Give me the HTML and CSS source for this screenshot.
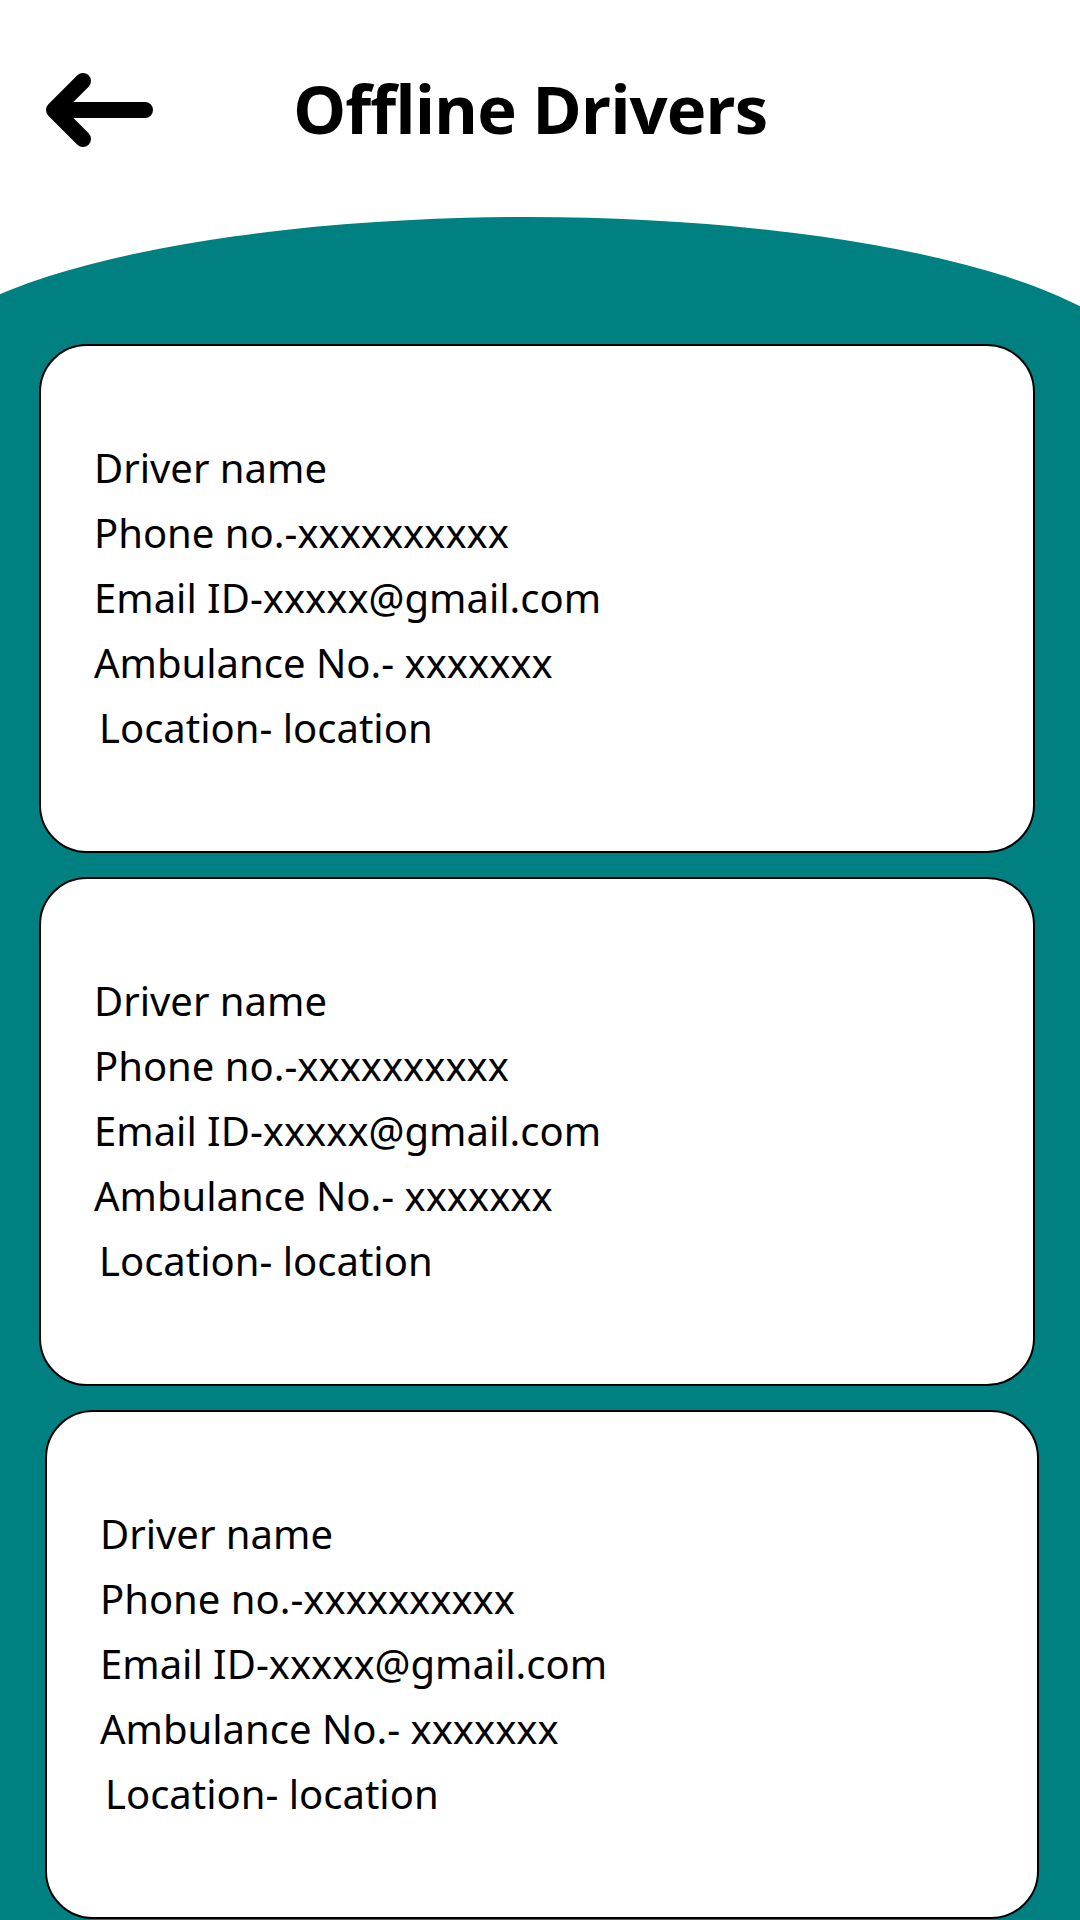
FILE: index.html
```html
<!DOCTYPE html>
<html lang="en">
<head>
<meta charset="utf-8">
<title>Offline Drivers</title>
<link rel="stylesheet" href="styles.css">
</head>
<body>
<div class="screen">
  <header class="header">
    <svg class="back" viewBox="0 0 125 85" width="125" height="85" aria-label="Back">
      <path d="M107 41 H20 M45 12 L16 41 L45 70" fill="none" stroke="#000" stroke-width="16" stroke-linecap="round" stroke-linejoin="round"/>
    </svg>
    <h1 class="title">Offline Drivers</h1>
  </header>
  <main class="panel">
    <section class="card">
      <p class="line">Driver name</p>
      <p class="line">Phone no.-xxxxxxxxxx</p>
      <p class="line">Email ID-xxxxx@gmail.com</p>
      <p class="line">Ambulance No.- xxxxxxx</p>
      <p class="line line--indent">Location- location</p>
    </section>
    <section class="card">
      <p class="line">Driver name</p>
      <p class="line">Phone no.-xxxxxxxxxx</p>
      <p class="line">Email ID-xxxxx@gmail.com</p>
      <p class="line">Ambulance No.- xxxxxxx</p>
      <p class="line line--indent">Location- location</p>
    </section>
    <section class="card card--shifted">
      <p class="line">Driver name</p>
      <p class="line">Phone no.-xxxxxxxxxx</p>
      <p class="line">Email ID-xxxxx@gmail.com</p>
      <p class="line">Ambulance No.- xxxxxxx</p>
      <p class="line line--indent">Location- location</p>
    </section>
  </main>
</div>
</body>
</html>
```
FILE: styles.css
```css
html, body {
  margin: 0;
  padding: 0;
  background: #ffffff;
}
body {
  width: 1080px;
  height: 1920px;
  overflow: hidden;
}
.screen {
  width: 1080px;
  height: 1920px;
  overflow: hidden;
  display: flex;
  flex-direction: column;
}
.header {
  flex: 0 0 auto;
  height: 212px;
  padding-top: 5px;
  padding-left: 38px;
  display: flex;
  align-items: center;
  gap: 130px;
}
.back {
  display: block;
  flex: 0 0 auto;
}
.title {
  margin: 0 0 6px 0;
  font-family: "Open Sans", "Noto Sans", sans-serif;
  font-weight: 700;
  font-size: 67px;
  letter-spacing: -1px;
  line-height: 1;
  color: #000;
}
.panel {
  flex: 1 0 auto;
  box-sizing: border-box;
  width: 1240px;
  margin-left: -93px;
  background: #008080;
  border-top-left-radius: 620px 163px;
  border-top-right-radius: 620px 163px;
  padding: 127px 112px 0 132px;
  display: flex;
  flex-direction: column;
  gap: 24px;
}
.card {
  box-sizing: border-box;
  width: 996px;
  height: 509px;
  flex: 0 0 auto;
  background: #fff;
  border: 2px solid #000;
  border-radius: 48px;
  padding: 89px 0 0 53px;
}
.card--shifted {
  margin-left: 6px;
  width: 994px;
}
.line {
  margin: 0;
  font-family: "Noto Sans", "Open Sans", sans-serif;
  font-size: 40px;
  line-height: 65px;
  color: #000;
  white-space: nowrap;
}
.line--indent {
  padding-left: 5px;
}
```
